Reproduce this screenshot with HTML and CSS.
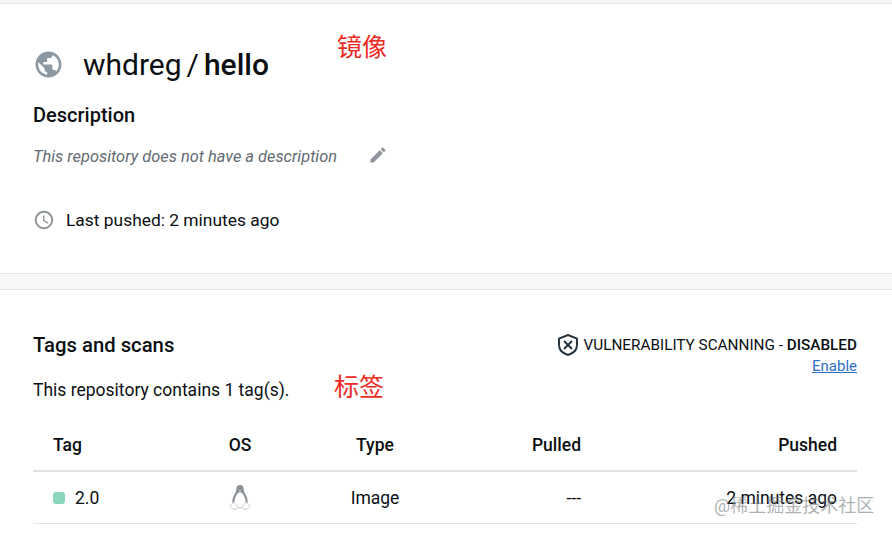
FILE: index.html
```html
<!DOCTYPE html>
<html lang="en">
  <head>
    <meta charset="UTF-8" />
    <meta name="viewport" content="width=device-width, initial-scale=1.0" />
    <title>whdreg / hello</title>
    <link rel="stylesheet" href="styles.css">
  </head>
  <body>
    <div class="top-strip"></div>

    <section class="repo-info">
      <div class="repo-title">
        <svg class="globe-icon" viewBox="0 0 24 24"><path d="M12 2C6.48 2 2 6.48 2 12s4.48 10 10 10 10-4.48 10-10S17.52 2 12 2zm-1 17.93c-3.95-.49-7-3.85-7-7.93 0-.62.08-1.21.21-1.79L9 15v1c0 1.1.9 2 2 2v1.93zm6.9-2.54c-.26-.81-1-1.39-1.9-1.39h-1v-3c0-.55-.45-1-1-1H8v-2h2c.55 0 1-.45 1-1V7h2c1.1 0 2-.9 2-2v-.41c2.93 1.19 5 4.06 5 7.41 0 2.08-.8 3.97-2.1 5.39z"/></svg>
        <h1>whdreg / <strong>hello</strong></h1>
      </div>

      <h2 class="desc-heading">Description</h2>
      <div class="desc-row">
        <em>This repository does not have a description</em>
        <svg class="edit-icon" viewBox="0 0 24 24"><path d="M3 17.25V21h3.75L17.81 9.94l-3.75-3.75L3 17.25zM20.71 7.04c.39-.39.39-1.02 0-1.41l-2.34-2.34c-.39-.39-1.02-.39-1.41 0l-1.83 1.83 3.75 3.75 1.83-1.83z"/></svg>
      </div>

      <div class="pushed-row">
        <svg class="clock-icon" viewBox="0 0 24 24"><path d="M11.99 2C6.47 2 2 6.48 2 12s4.47 10 9.99 10C17.52 22 22 17.52 22 12S17.52 2 11.99 2zM12 20c-4.42 0-8-3.58-8-8s3.58-8 8-8 8 3.58 8 8-3.58 8-8 8zm.5-13H11v6l5.25 3.15.75-1.23-4.5-2.67z"/></svg>
        <span>Last pushed: 2 minutes ago</span>
      </div>
    </section>

    <div class="band"></div>

    <section class="tags">
      <div class="tags-head">
        <div>
          <h2>Tags and scans</h2>
          <p>This repository contains 1 tag(s).</p>
        </div>
        <div class="scan-status">
          <div class="scan-line">
            <svg class="shield-icon" viewBox="0 0 24 24"><path d="M12 2 21 5.6v6.2c0 4.9-3.6 8.6-9 10.2-5.400-1.600-9-5.300-9-10.200V5.600z" fill="none" stroke="#27343f" stroke-width="2" stroke-linejoin="round"/><path d="M8 8l8 8m0-8l-8 8" fill="none" stroke="#27343f" stroke-width="2"/></svg>
            <span>VULNERABILITY SCANNING - <b>DISABLED</b></span>
          </div>
          <a href="#">Enable</a>
        </div>
      </div>

      <div class="tag-table">
        <div class="tag-row header-row">
          <span>Tag</span>
          <span class="center">OS</span>
          <span class="center">Type</span>
          <span class="right">Pulled</span>
          <span class="right">Pushed</span>
        </div>
        <div class="tag-row">
          <span class="tag-name"><i class="dot"></i>2.0</span>
          <span class="center">
            <svg class="tux-icon" viewBox="0 0 24 30">
              <path d="M12 1C8.800 1 7.800 3.300 7.800 6c0 2.200-.8 3.600-2 5.500C4.200 14 3.200 17.500 3.600 22h16.800c.4-4.500-.6-8-2.200-10.500-1.200-1.900-2-3.300-2-5.500 0-2.700-1-5-4.200-5z" fill="#8b9298"/>
              <path d="M12 9.500c-2 0-3 1.200-4 3.100-1.300 2.600-2.400 5-2.200 8.900 1.500 3 10.900 3 12.400 0 .2-3.900-.9-6.300-2.200-8.900-1-1.900-2-3.100-4-3.100z" fill="#fff"/>
              <path d="M10 7.500h4l-2 1.500z" fill="#d5d8da"/>
              <path d="M5 20.500c-2 .6-3.500 2.800-4 5 1.500 1.500 4 2.800 6 2.800 1.500 0 2.400-1.600 1.800-3.500-.6-2-2.300-4.300-3.800-4.300zM19 20.500c2 .6 3.500 2.800 4 5-1.500 1.500-4 2.800-6 2.800-1.500 0-2.400-1.600-1.800-3.500.6-2 2.300-4.300 3.800-4.300z" fill="#fff" stroke="#c3c8cc"/>
              <path d="M9 26.500h6" stroke="#c3c8cc" fill="none"/>
            </svg>
          </span>
          <span class="center">Image</span>
          <span class="right">---</span>
          <span class="right">2 minutes ago</span>
        </div>
      </div>
    </section>

    <div class="note note-mirror">镜像</div>
    <div class="note note-tag">标签</div>
    <div class="watermark">@稀土掘金技术社区</div>
  </body>
</html>
```

FILE: styles.css
```css
body {
  font-family: Roboto, "Noto Sans CJK SC", sans-serif;
  margin: 0;
  background-color: white;
  color: #0b0f13;
  height: 533px;
  overflow: hidden;
  position: relative;
}

h1,
h2,
p {
  margin: 0;
  font-weight: inherit;
}

.top-strip {
  height: 3px;
  background-color: #f5f6f7;
  border-bottom: 1px solid #e4e6e8;
}

.repo-info {
  height: 269px;
  box-sizing: border-box;
  padding: 41px 33px 0;
}

.repo-title {
  display: flex;
  align-items: center;
  height: 38px;
}

.globe-icon {
  width: 31px;
  height: 31px;
  fill: #8a98a3;
  margin-right: 19px;
}

.repo-title h1 {
  font-size: 30px;
  font-weight: 400;
  word-spacing: -2.5px;
}

.repo-title strong {
  font-weight: 500;
}

.desc-heading {
  font-size: 20px;
  font-weight: 500;
  line-height: 24px;
  margin-top: 20px;
}

.desc-row {
  display: flex;
  align-items: center;
  margin-top: 17px;
  height: 24px;
  font-size: 16.4px;
  color: #636a72;
}

.edit-icon {
  width: 20px;
  height: 20px;
  fill: #8f949c;
  margin-left: 31px;
  margin-top: -2px;
}

.pushed-row {
  display: flex;
  align-items: center;
  margin-top: 40px;
  font-size: 17.4px;
  line-height: 24px;
}

.clock-icon {
  width: 22px;
  height: 22px;
  fill: #8b9297;
  margin-right: 11px;
}

.band {
  height: 15px;
  background-color: #f6f7f8;
  border-top: 1px solid #e3e5e7;
  border-bottom: 1px solid #e3e5e7;
}

.tags {
  padding: 43px 35px 0 33px;
}

.tags-head {
  display: flex;
  justify-content: space-between;
}

.tags-head h2 {
  font-size: 20.3px;
  font-weight: 500;
  line-height: 24px;
}

.tags-head p {
  font-size: 17.5px;
  line-height: 24px;
  margin-top: 21px;
}

.scan-status {
  text-align: right;
  font-size: 15px;
  margin-top: 1px;
}

.scan-line {
  display: flex;
  align-items: center;
  line-height: 22px;
  font-size: 15.3px;
}

.scan-line b {
  font-weight: 500;
}

.shield-icon {
  width: 24px;
  height: 24px;
  margin: -1px 4px -1px 0;
}

.scan-status a {
  color: #2f6fc4;
  line-height: 20px;
}

.tag-table {
  margin-top: 21px;
}

.tag-row {
  display: grid;
  grid-template-columns: 137px 100px 170px 121px 256px;
  align-items: center;
  padding: 0 20px;
  height: 51px;
  font-size: 17.5px;
  border-bottom: 1px solid #dfe1e3;
}

.header-row {
  font-weight: 500;
  height: 49px;
  padding-bottom: 3px;
  box-sizing: border-box;
  border-bottom: 2px solid #dfe1e3;
}

.center {
  text-align: center;
}

.right {
  text-align: right;
}

.tag-name {
  display: flex;
  align-items: center;
}

.dot {
  width: 12px;
  height: 12px;
  border-radius: 3px;
  background-color: #8ad6bd;
  margin-right: 10px;
}

.tux-icon {
  display: block;
  width: 22px;
  height: 27px;
  margin: 0 auto;
}

.note {
  position: absolute;
  color: #ec2c24;
  font-size: 25px;
  line-height: 30px;
}

.note-mirror {
  left: 337px;
  top: 33px;
}

.note-tag {
  left: 334px;
  top: 373px;
}

.watermark {
  position: absolute;
  left: 714px;
  top: 495px;
  font-size: 18px;
  line-height: 22px;
  color: rgba(120, 125, 130, 0.6);
}
```
